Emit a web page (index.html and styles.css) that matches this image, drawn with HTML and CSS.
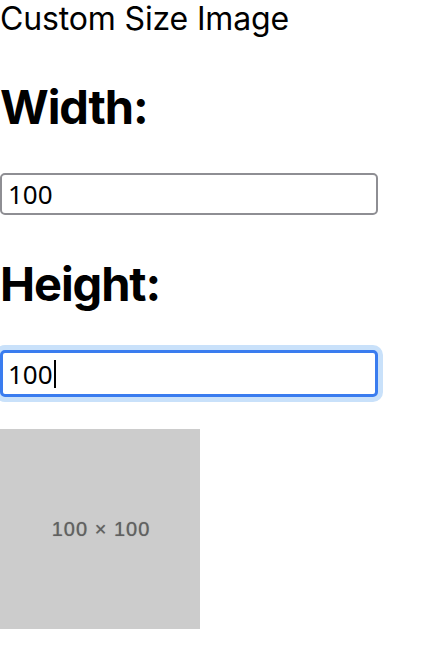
FILE: index.html
```html
<!DOCTYPE html>
<html>
<head>
<meta charset="utf-8">
<link rel="stylesheet" href="styles.css">
</head>
<body>
<div class="title">Custom Size Image</div>
<h2 class="label label-first">Width:</h2>
<input class="field" type="text" value="100">
<h2 class="label label-second">Height:</h2>
<div class="focused-wrap"><input class="field field-focused" type="text" value="100"><span class="caret"></span></div>
<div class="placeholder"><span class="placeholder-text">100 × 100</span></div>
</body>
</html>
```
FILE: styles.css
```css
html, body {
  margin: 0;
  padding: 0;
  background: #ffffff;
}
body {
  font-family: Inter, "Liberation Sans", sans-serif;
  color: #000;
  width: 422px;
  overflow: hidden;
}
.title {
  font-size: 32px;
  line-height: 38px;
  letter-spacing: -0.15px;
}
.label {
  font-size: 47px;
  font-weight: 700;
  line-height: 57px;
  letter-spacing: -1.1px;
  margin: 0;
}
.label-first {
  margin-top: 40px;
  margin-bottom: 38px;
}
.label-second {
  margin-top: 40px;
  margin-bottom: 38px;
}
.field {
  display: block;
  box-sizing: border-box;
  width: 378px;
  height: 42px;
  margin: 0;
  padding: 0 0 0 6px;
  border: 2px solid #8e8e93;
  border-radius: 5px;
  font-family: "Noto Sans", "Liberation Sans", sans-serif;
  font-size: 26px;
  color: #000;
  background: #fff;
  outline: none;
}
.focused-wrap {
  position: relative;
  width: 378px;
}
.field-focused {
  height: 47px;
  border: 3px solid #3a7cef;
  padding-left: 5px;
  box-shadow: 0 0 0 5px #c9e1fa;
}
.caret {
  position: absolute;
  left: 54px;
  top: 10px;
  width: 2px;
  height: 28px;
  background: #000;
}
.placeholder {
  margin-top: 32px;
  width: 200px;
  height: 200px;
  background: #cccccc;
  display: flex;
  align-items: center;
  justify-content: center;
}
.placeholder-text {
  font-family: "Liberation Sans", sans-serif;
  font-size: 20px;
  letter-spacing: 1px;
  color: #606060;
  text-shadow: 0 0 1px #808080;
  padding-left: 2px;
}
```
